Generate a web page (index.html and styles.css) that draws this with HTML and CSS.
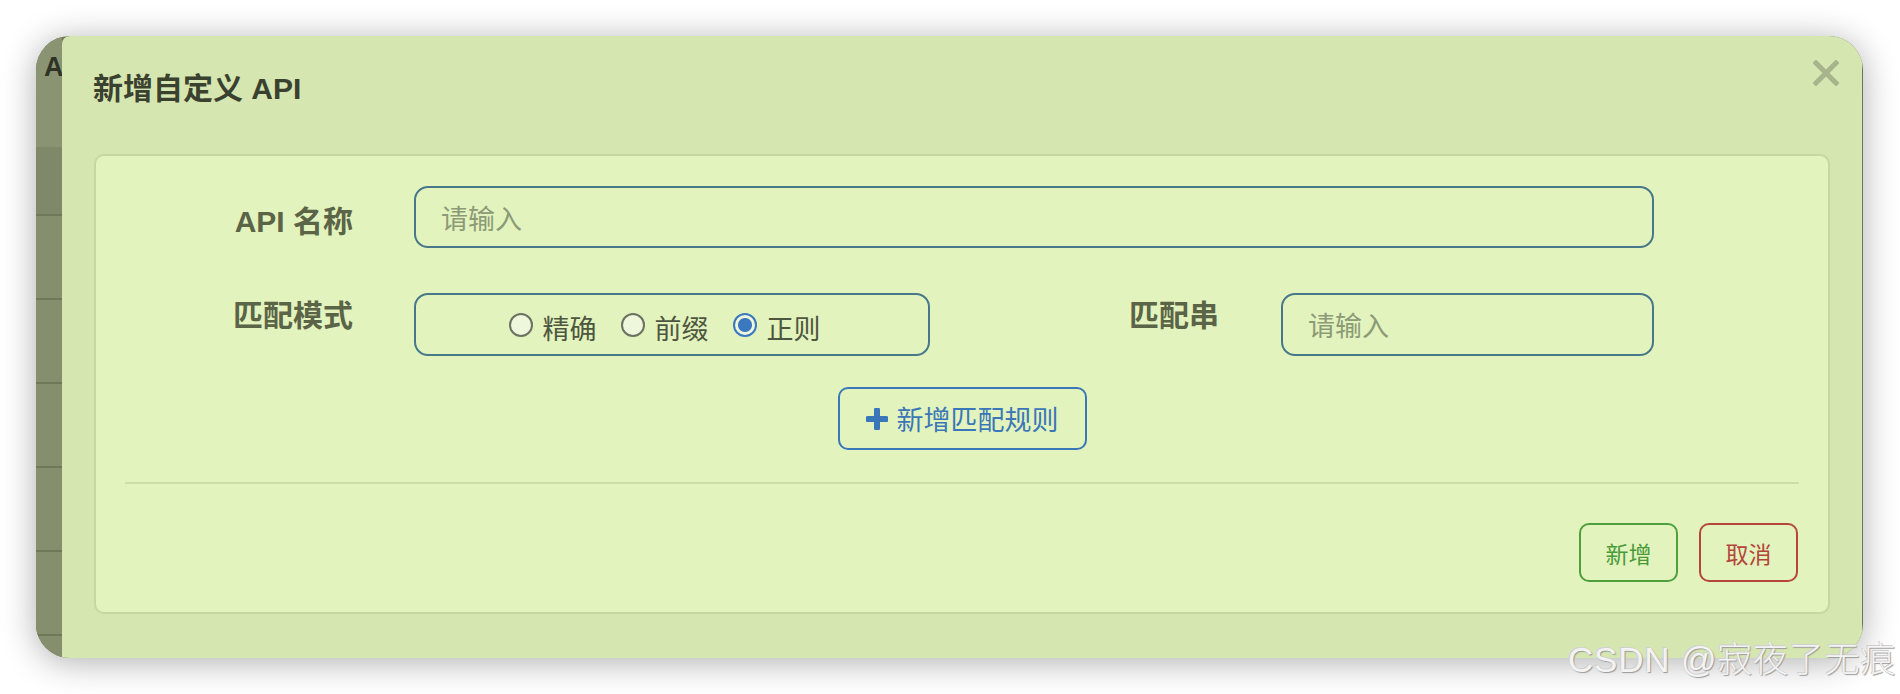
FILE: index.html
```html
<!DOCTYPE html>
<html lang="zh-CN">
<head>
<meta charset="utf-8">
<title>新增自定义 API</title>
<link rel="stylesheet" href="styles.css">
</head>
<body>
<div class="window">
  <div class="backdrop">
    <div class="bd-head">A</div>
    <div class="bd-row bd-first"></div>
    <div class="bd-row"></div>
    <div class="bd-row"></div>
    <div class="bd-row"></div>
    <div class="bd-row"></div>
    <div class="bd-row"></div>
  </div>
  <div class="dialog">
    <div class="dialog-header">
      <h2 class="dialog-title">新增自定义 API</h2>
      <button class="close" aria-label="关闭">
        <svg viewBox="0 0 26 26" width="26" height="26"><path d="M3 3 L23 23 M23 3 L3 23" stroke="#a8b48c" stroke-width="5" stroke-linecap="square"/></svg>
      </button>
    </div>
    <div class="panel">
      <div class="row row-name">
        <label class="label">API 名称</label>
        <input class="input input-wide" placeholder="请输入">
      </div>
      <div class="row row-match">
        <label class="label label-top">匹配模式</label>
        <div class="radio-box">
          <span class="radio-item"><span class="radio"></span>精确</span>
          <span class="radio-item"><span class="radio"></span>前缀</span>
          <span class="radio-item"><span class="radio checked"></span>正则</span>
        </div>
        <label class="label label-str">匹配串</label>
        <input class="input input-str" placeholder="请输入">
      </div>
      <div class="row row-add">
        <button class="btn-add">
          <svg viewBox="0 0 22 22" width="22" height="22"><path d="M11 2 V20 M2 11 H20" stroke="#3a77b8" stroke-width="6" stroke-linecap="round"/></svg>
          新增匹配规则
        </button>
      </div>
      <div class="divider"></div>
      <div class="footer">
        <button class="btn btn-ok">新增</button>
        <button class="btn btn-cancel">取消</button>
      </div>
    </div>
  </div>
</div>
<div class="watermark">CSDN @寂夜了无痕</div>
</body>
</html>
```

FILE: styles.css
```css
html, body {
  margin: 0;
  padding: 0;
  background: #ffffff;
  font-family: "Noto Sans CJK SC", "Noto Sans", sans-serif;
}

body {
  width: 1900px;
  height: 694px;
  position: relative;
  overflow: hidden;
}

.window {
  margin: 36px 0 0 36px;
  width: 1827px;
  height: 622px;
  border-radius: 34px;
  overflow: hidden;
  display: flex;
  background: #6e7859;
  box-shadow: 0 4px 34px rgba(0, 0, 0, 0.32);
}

.backdrop {
  width: 26px;
  flex: none;
  display: flex;
  flex-direction: column;
  background: #858f6d;
}

.bd-head {
  height: 111px;
  flex: none;
  background: #8a9473;
  box-sizing: border-box;
  padding: 18px 0 0 8px;
  font-family: "Liberation Sans", sans-serif;
  font-weight: bold;
  font-size: 27px;
  line-height: 1;
  color: #2e3326;
}

.bd-row {
  height: 82px;
  flex: none;
  background: #858f6d;
  border-bottom: 2px solid #6f7959;
}

.bd-first {
  height: 67px;
  background: #7f896a;
}

.dialog {
  width: 1800px;
  flex: none;
  background: #d5e6b0;
  border-top-left-radius: 8px;
  position: relative;
}

.dialog-header {
  height: 118px;
  box-sizing: border-box;
  padding: 33px 0 0 31px;
}

.dialog-title {
  margin: 0;
  font-family: "Liberation Sans", "Noto Sans CJK SC", sans-serif;
  font-size: 30px;
  line-height: 40px;
  font-weight: bold;
  color: #3b412f;
}

.close {
  position: absolute;
  left: 1751px;
  top: 24px;
  width: 26px;
  height: 26px;
  padding: 0;
  border: 0;
  background: transparent;
}

.close svg {
  display: block;
}

.panel {
  margin: 0 32px;
  height: 460px;
  box-sizing: border-box;
  border: 2px solid #c7d7a3;
  border-radius: 10px;
  background: #e2f3bd;
  padding-top: 30px;
}

.row {
  display: flex;
  align-items: center;
}

.label {
  width: 257px;
  flex: none;
  text-align: right;
  font-family: "Liberation Sans", "Noto Sans CJK SC", sans-serif;
  font-size: 30px;
  font-weight: bold;
  color: #5b6447;
  line-height: 40px;
}

.row-name .label {
  margin-top: 10px;
}

.input {
  box-sizing: border-box;
  height: 62px;
  border: 2px solid #47788a;
  border-radius: 14px;
  background: #e2f3bd;
  padding: 0 0 0 25px;
  font-family: "Noto Sans CJK SC", sans-serif;
  font-size: 27px;
  color: #4f5640;
  outline: none;
}

.input::placeholder {
  color: #8c9a77;
}

.input-wide {
  margin-left: 61px;
  width: 1240px;
}

.row-match {
  margin-top: 45px;
  align-items: flex-start;
}

.label-top {
  margin-top: 3px;
}

.radio-box {
  margin-left: 61px;
  width: 516px;
  height: 63px;
  box-sizing: border-box;
  border: 2px solid #47788a;
  border-radius: 14px;
  display: flex;
  align-items: center;
  justify-content: center;
  gap: 24px;
  padding: 6px 15px 0 0;
}

.radio-item {
  display: flex;
  align-items: center;
  gap: 10px;
  font-size: 27px;
  line-height: 36px;
  color: #4f5640;
}

.radio {
  width: 24px;
  height: 24px;
  box-sizing: border-box;
  border: 2px solid #6c7260;
  border-radius: 50%;
  background: #eef6dc;
  margin-top: -5px;
}

.radio.checked {
  border-color: #3b78c0;
  background: radial-gradient(circle, #3b78c0 0 6.5px, #eef6dc 7.5px);
}

.label-str {
  width: auto;
  margin-left: 199px;
  margin-top: 3px;
}

.input-str {
  margin-left: 62px;
  width: 373px;
  height: 63px;
}

.row-add {
  margin-top: 31px;
  justify-content: center;
}

.btn-add {
  display: flex;
  align-items: center;
  gap: 9px;
  height: 63px;
  width: 249px;
  box-sizing: border-box;
  justify-content: center;
  border: 2px solid #3a77b8;
  border-radius: 10px;
  background: transparent;
  font-family: "Noto Sans CJK SC", sans-serif;
  font-size: 27px;
  color: #3a77b8;
  padding: 0;
}

.btn-add svg {
  display: block;
}

.divider {
  margin: 32px 29px 0;
  height: 2px;
  background: #cddca9;
}

.footer {
  display: flex;
  justify-content: flex-end;
  gap: 21px;
  margin-top: 39px;
  padding-right: 30px;
}

.btn {
  width: 99px;
  height: 59px;
  box-sizing: border-box;
  border-radius: 10px;
  background: transparent;
  font-family: "Noto Sans CJK SC", sans-serif;
  font-size: 23px;
  padding: 0;
}

.btn-ok {
  border: 2px solid #4e9f3d;
  color: #4a9a39;
}

.btn-cancel {
  border: 2px solid #b5463a;
  color: #b4453a;
}

.watermark {
  position: absolute;
  left: 1568px;
  top: 635px;
  font-family: "Liberation Sans", "Noto Sans CJK SC", sans-serif;
  font-size: 35px;
  line-height: 50px;
  font-weight: 300;
  letter-spacing: 0.8px;
  color: #f3f3f3;
  white-space: nowrap;
  text-shadow: 1px 1px 1px #9a9a9a, -1px -1px 0 #d0d0d0;
}
```
